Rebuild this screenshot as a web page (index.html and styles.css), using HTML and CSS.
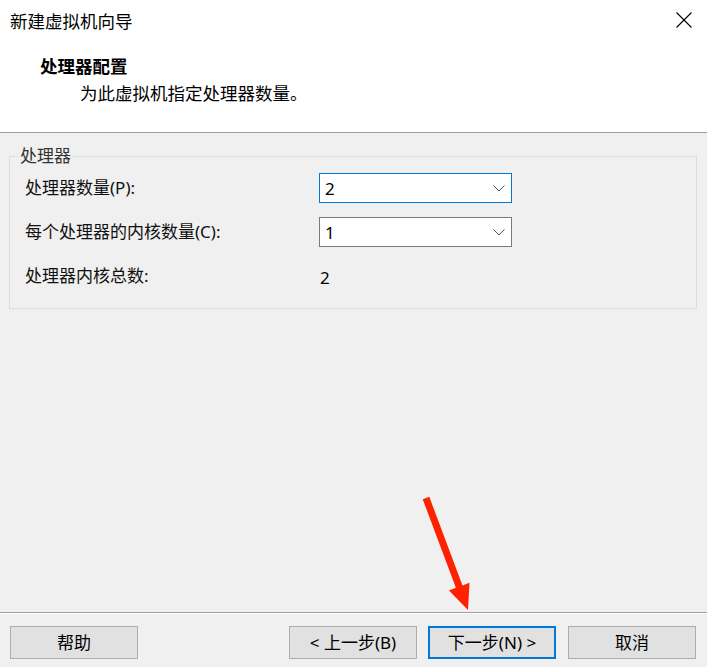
FILE: index.html
```html
<!DOCTYPE html>
<html lang="zh-CN">
<head>
<meta charset="utf-8">
<title>新建虚拟机向导</title>
<link rel="stylesheet" href="styles.css">
</head>
<body>
<div class="window">
  <div class="titlebar">
    <span class="title">新建虚拟机向导</span>
    <svg class="close" width="16" height="16" viewBox="0 0 16 16"><path d="M0.5 0.5 L15.5 15.5 M15.5 0.5 L0.5 15.5" stroke="#000" stroke-width="1.1" fill="none"/></svg>
  </div>
  <div class="header">
    <div class="h-title">处理器配置</div>
    <div class="h-sub">为此虚拟机指定处理器数量。</div>
  </div>
  <div class="content">
    <div class="group">
      <span class="legend">处理器</span>
      <div class="grid">
        <div class="label">处理器数量(P):</div>
        <div class="combo focused"><span>2</span><svg width="12" height="7" viewBox="0 0 12 7"><path d="M0.5 0.5 L6 6 L11.5 0.5" stroke="#555" stroke-width="1" fill="none"/></svg></div>
        <div class="label">每个处理器的内核数量(C):</div>
        <div class="combo"><span>1</span><svg width="12" height="7" viewBox="0 0 12 7"><path d="M0.5 0.5 L6 6 L11.5 0.5" stroke="#555" stroke-width="1" fill="none"/></svg></div>
        <div class="label">处理器内核总数:</div>
        <div class="value">2</div>
      </div>
    </div>
  </div>
  <div class="footer">
    <button class="btn">帮助</button>
    <div class="spacer"></div>
    <button class="btn">&lt; 上一步(B)</button>
    <button class="btn primary">下一步(N) &gt;</button>
    <button class="btn">取消</button>
  </div>
  <svg class="arrow" width="707" height="667" viewBox="0 0 707 667"><polygon points="429.3,496.8 462.5,585.4 469.5,582.7 468,610 448.9,590.5 455.9,587.8 422.7,499.2" fill="#ff2200"/></svg>
</div>
</body>
</html>
```
FILE: styles.css
```css
html, body {
  margin: 0;
  padding: 0;
  width: 707px;
  height: 667px;
  overflow: hidden;
  background: #f0f0f0;
}
.window {
  position: relative;
  width: 707px;
  height: 667px;
  display: flex;
  flex-direction: column;
  font-family: "Noto Sans", "Noto Sans CJK SC", sans-serif;
  font-size: 17px;
  color: #000;
}
.titlebar {
  height: 40px;
  background: #fff;
  display: flex;
  align-items: center;
  justify-content: space-between;
  padding: 0 15px 0 10px;
}
.title {
  font-family: "Noto Sans CJK SC", sans-serif;
  font-size: 17.5px;
  line-height: 20px;
  margin-top: 1px;
}
.close {
  display: block;
}
.header {
  background: #fff;
  box-sizing: border-box;
  border-bottom: 1px solid #a0a0a0;
  padding: 16px 0 0 40px;
  height: 93px;
  font-family: "Noto Sans CJK SC", sans-serif;
}
.h-title {
  font-weight: bold;
  font-size: 17.5px;
  line-height: 20px;
}
.h-sub {
  margin: 7px 0 0 40px;
  font-size: 17.5px;
  line-height: 20px;
}
.content {
  flex: 1;
  padding: 23px 10px 0 9px;
}
.group {
  position: relative;
  box-sizing: border-box;
  border: 1px solid #dcdcdc;
  height: 153px;
  padding: 16px 15px 0 15px;
}
.legend {
  position: absolute;
  left: 8px;
  top: -11px;
  padding: 0 2px;
  background: #f0f0f0;
  line-height: 20px;
  color: #333;
}
.grid {
  display: grid;
  grid-template-columns: 294px 193px;
  grid-auto-rows: 30px;
  row-gap: 14px;
  align-items: center;
}
.label {
  line-height: 20px;
  color: #111;
}
.label.last, .value {
  margin-top: 2px;
}
.combo {
  box-sizing: border-box;
  height: 30px;
  border: 1px solid #7a7a7a;
  background: #fff;
  display: flex;
  align-items: center;
  justify-content: space-between;
  padding: 0 6px 0 5px;
}
.combo.focused {
  border-color: #0078d7;
}
.combo svg {
  display: block;
}
.value {
  padding-left: 1px;
}
.footer {
  height: 55px;
  box-sizing: border-box;
  border-top: 1px solid #a0a0a0;
  box-shadow: inset 0 1px 0 #fff;
  display: flex;
  align-items: flex-start;
  padding: 13px 11px 0 10px;
}
.spacer {
  flex: 1;
}
.btn {
  width: 128px;
  height: 33px;
  box-sizing: border-box;
  border: 1px solid #adadad;
  background: #e1e1e1;
  font-family: "Noto Sans", "Noto Sans CJK SC", sans-serif;
  font-size: 17px;
  color: #000;
  padding: 0;
  line-height: 20px;
}
.btn.primary {
  border: 2px solid #0078d7;
  margin: 0 12px 0 11px;
}
.arrow {
  position: absolute;
  left: 0;
  top: 0;
  pointer-events: none;
}
```
